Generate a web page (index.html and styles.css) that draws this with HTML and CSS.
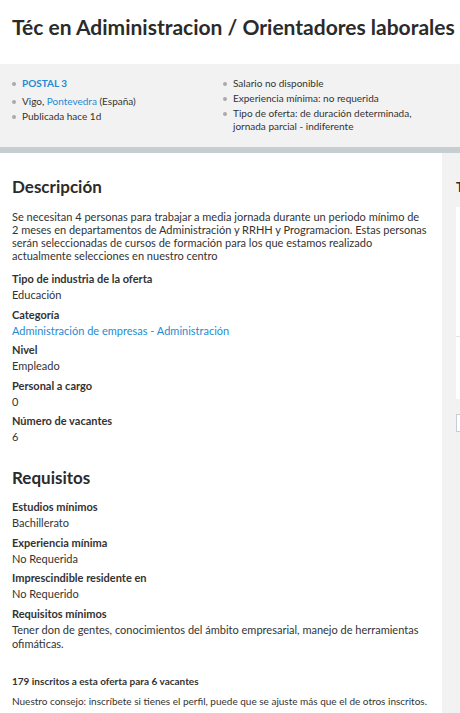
FILE: index.html
```html
<!DOCTYPE html>
<html lang="es">
<head>
<meta charset="utf-8">
<title>Téc en Adiministracion / Orientadores laborales</title>
<link rel="stylesheet" href="styles.css">
</head>
<body>
<div class="page">
  <header class="title-bar">
    <h1>Téc en Adiministracion / Orientadores laborales</h1>
  </header>
  <section class="summary">
    <ul class="facts facts-left">
      <li class="company"><a href="#">POSTAL 3</a></li>
      <li>Vigo, <a href="#">Pontevedra</a> (España)</li>
      <li>Publicada hace 1d</li>
    </ul>
    <ul class="facts facts-right">
      <li>Salario no disponible</li>
      <li>Experiencia mínima: no requerida</li>
      <li>Tipo de oferta: de duración determinada, jornada parcial - indiferente</li>
    </ul>
  </section>
  <div class="divider"></div>
  <div class="layout">
    <main class="content">
      <h2>Descripción</h2>
      <p class="desc">Se necesitan 4 personas para trabajar a media jornada durante un periodo mínimo de 2 meses en departamentos de Administración y RRHH y Programacion. Estas personas serán seleccionadas de cursos de formación para los que estamos realizado actualmente selecciones en nuestro centro</p>
      <dl class="details">
        <dt>Tipo de industria de la oferta</dt>
        <dd>Educación</dd>
        <dt>Categoría</dt>
        <dd><a href="#">Administración de empresas - Administración</a></dd>
        <dt>Nivel</dt>
        <dd>Empleado</dd>
        <dt>Personal a cargo</dt>
        <dd>0</dd>
        <dt>Número de vacantes</dt>
        <dd>6</dd>
      </dl>
      <h2 class="req-title">Requisitos</h2>
      <dl class="details">
        <dt>Estudios mínimos</dt>
        <dd>Bachillerato</dd>
        <dt>Experiencia mínima</dt>
        <dd>No Requerida</dd>
        <dt>Imprescindible residente en</dt>
        <dd>No Requerido</dd>
        <dt>Requisitos mínimos</dt>
        <dd>Tener don de gentes, conocimientos del ámbito empresarial, manejo de herramientas ofimáticas.</dd>
      </dl>
      <p class="applicants">179 inscritos a esta oferta para 6 vacantes</p>
      <p class="advice">Nuestro consejo: inscríbete si tienes el perfil, puede que se ajuste más que el de otros inscritos.</p>
    </main>
    <aside class="sidebar">
      <h3>Tu perfil</h3>
      <div class="side-card">
        <div class="side-top"></div>
        <div class="side-bottom"></div>
      </div>
      <div class="side-button"></div>
    </aside>
  </div>
</div>
</body>
</html>
```
FILE: styles.css
```css
* { box-sizing: border-box; }
html, body { margin: 0; padding: 0; }
body {
  font-family: Lato, "Liberation Sans", Arial, sans-serif;
  color: #333;
  background: #fff;
  overflow: hidden;
  width: 460px;
  height: 713px;
}
a { color: #1f8ad2; text-decoration: none; }
.page { width: 460px; }

.title-bar {
  height: 64px;
  padding: 14px 0 0 12px;
  white-space: nowrap;
}
.title-bar h1 {
  margin: 0;
  font-size: 21px;
  line-height: 26px;
  font-weight: 700;
  color: #2b2b2b;
}

.summary {
  background: #f2f2f2;
  height: 83px;
  display: grid;
  grid-template-columns: 211px 1fr;
  padding: 13px 12px 0 12px;
}
.facts {
  list-style: none;
  margin: 0;
  padding: 0;
  font-size: 10px;
  line-height: 13px;
}
.facts li {
  position: relative;
  padding-left: 10px;
  margin-bottom: 2px;
}
.facts li::before {
  content: "";
  position: absolute;
  left: 0;
  top: 5px;
  width: 4px;
  height: 4px;
  border-radius: 50%;
  background: #aaa;
}
.facts-left .company { font-weight: 700; margin-bottom: 5px; }
.facts-right li:last-child { width: 200px; }

.divider { height: 6px; background: #c7ced1; }

.layout {
  display: grid;
  grid-template-columns: 442px 220px;
}
.content {
  padding: 24px 15px 0 12px;
}
.content h2 {
  margin: 0 0 13px 0;
  font-size: 17px;
  line-height: 20px;
  font-weight: 700;
  color: #2b2b2b;
}
.desc {
  margin: 0 0 9px 0;
  font-size: 11px;
  line-height: 13px;
}
.details { margin: 0; font-size: 11px; line-height: 16px; }
.details dt { font-weight: 700; margin-top: 4.5px; }
.details dd { margin: 0; padding-top: 1px; line-height: 14px; }
.details dt:first-child { margin-top: 0; }
.content .req-title { margin: 24px 0 11px 0; }
.applicants {
  margin: 24px 0 0 0;
  font-size: 10px;
  line-height: 13px;
  font-weight: 700;
}
.advice {
  margin: 7px 0 0 0;
  font-size: 10px;
  line-height: 13px;
  white-space: nowrap;
}

.sidebar {
  background: #f2f2f2;
  padding: 26px 14px 0 14px;
  min-height: 600px;
}
.sidebar h3 {
  margin: 0 0 12px 0;
  font-size: 13px;
  font-weight: 700;
  color: #2b2b2b;
}
.side-card { background: #fff; }
.side-top { height: 130px; border-bottom: 1px solid #e3e3e3; }
.side-bottom { height: 62px; }
.side-button {
  margin-top: 15px;
  height: 18px;
  background: #fff;
  border: 1px solid #c7ced1;
}
```
